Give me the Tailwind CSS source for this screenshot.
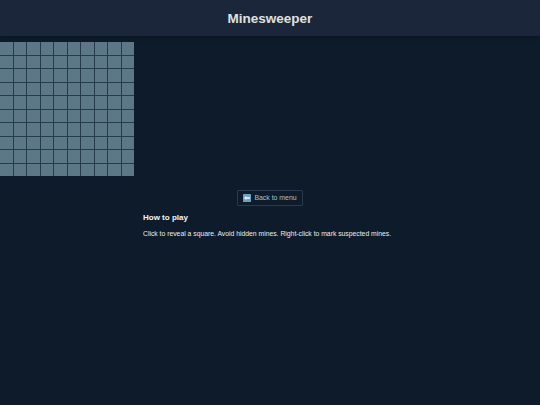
<!DOCTYPE html>
<html lang="en">
<head>
  <meta charset="UTF-8">
  <title>Minesweeper</title>
  <script src="https://cdn.jsdelivr.net/npm/@tailwindcss/browser@4"></script>
</head>
<body class="bg-[#0d1b2a] min-h-screen font-['Liberation_Sans',sans-serif] antialiased overflow-hidden">

  <!-- Header -->
  <header class="h-9 bg-[#1b263b] flex items-center justify-center shadow-[0_1px_4px_rgba(0,0,0,0.3)]">
    <h1 class="text-[13.5px] font-bold text-[#e0e1dd] translate-y-[0.5px]">Minesweeper</h1>
  </header>

  <!-- Board -->
  <div class="mt-[6px] w-[134px] h-[134px] grid grid-cols-10 grid-rows-10 gap-px bg-[#263b4b]">
    <div class="bg-[#5c7785]"></div><div class="bg-[#5c7785]"></div><div class="bg-[#5c7785]"></div><div class="bg-[#5c7785]"></div><div class="bg-[#5c7785]"></div><div class="bg-[#5c7785]"></div><div class="bg-[#5c7785]"></div><div class="bg-[#5c7785]"></div><div class="bg-[#5c7785]"></div><div class="bg-[#5c7785]"></div>
    <div class="bg-[#5c7785]"></div><div class="bg-[#5c7785]"></div><div class="bg-[#5c7785]"></div><div class="bg-[#5c7785]"></div><div class="bg-[#5c7785]"></div><div class="bg-[#5c7785]"></div><div class="bg-[#5c7785]"></div><div class="bg-[#5c7785]"></div><div class="bg-[#5c7785]"></div><div class="bg-[#5c7785]"></div>
    <div class="bg-[#5c7785]"></div><div class="bg-[#5c7785]"></div><div class="bg-[#5c7785]"></div><div class="bg-[#5c7785]"></div><div class="bg-[#5c7785]"></div><div class="bg-[#5c7785]"></div><div class="bg-[#5c7785]"></div><div class="bg-[#5c7785]"></div><div class="bg-[#5c7785]"></div><div class="bg-[#5c7785]"></div>
    <div class="bg-[#5c7785]"></div><div class="bg-[#5c7785]"></div><div class="bg-[#5c7785]"></div><div class="bg-[#5c7785]"></div><div class="bg-[#5c7785]"></div><div class="bg-[#5c7785]"></div><div class="bg-[#5c7785]"></div><div class="bg-[#5c7785]"></div><div class="bg-[#5c7785]"></div><div class="bg-[#5c7785]"></div>
    <div class="bg-[#5c7785]"></div><div class="bg-[#5c7785]"></div><div class="bg-[#5c7785]"></div><div class="bg-[#5c7785]"></div><div class="bg-[#5c7785]"></div><div class="bg-[#5c7785]"></div><div class="bg-[#5c7785]"></div><div class="bg-[#5c7785]"></div><div class="bg-[#5c7785]"></div><div class="bg-[#5c7785]"></div>
    <div class="bg-[#5c7785]"></div><div class="bg-[#5c7785]"></div><div class="bg-[#5c7785]"></div><div class="bg-[#5c7785]"></div><div class="bg-[#5c7785]"></div><div class="bg-[#5c7785]"></div><div class="bg-[#5c7785]"></div><div class="bg-[#5c7785]"></div><div class="bg-[#5c7785]"></div><div class="bg-[#5c7785]"></div>
    <div class="bg-[#5c7785]"></div><div class="bg-[#5c7785]"></div><div class="bg-[#5c7785]"></div><div class="bg-[#5c7785]"></div><div class="bg-[#5c7785]"></div><div class="bg-[#5c7785]"></div><div class="bg-[#5c7785]"></div><div class="bg-[#5c7785]"></div><div class="bg-[#5c7785]"></div><div class="bg-[#5c7785]"></div>
    <div class="bg-[#5c7785]"></div><div class="bg-[#5c7785]"></div><div class="bg-[#5c7785]"></div><div class="bg-[#5c7785]"></div><div class="bg-[#5c7785]"></div><div class="bg-[#5c7785]"></div><div class="bg-[#5c7785]"></div><div class="bg-[#5c7785]"></div><div class="bg-[#5c7785]"></div><div class="bg-[#5c7785]"></div>
    <div class="bg-[#5c7785]"></div><div class="bg-[#5c7785]"></div><div class="bg-[#5c7785]"></div><div class="bg-[#5c7785]"></div><div class="bg-[#5c7785]"></div><div class="bg-[#5c7785]"></div><div class="bg-[#5c7785]"></div><div class="bg-[#5c7785]"></div><div class="bg-[#5c7785]"></div><div class="bg-[#5c7785]"></div>
    <div class="bg-[#5c7785]"></div><div class="bg-[#5c7785]"></div><div class="bg-[#5c7785]"></div><div class="bg-[#5c7785]"></div><div class="bg-[#5c7785]"></div><div class="bg-[#5c7785]"></div><div class="bg-[#5c7785]"></div><div class="bg-[#5c7785]"></div><div class="bg-[#5c7785]"></div><div class="bg-[#5c7785]"></div>
  </div>

  <!-- Back button -->
  <div class="mt-[14px] flex justify-center">
    <button class="h-[16px] w-[66px] flex items-center justify-center gap-[3px] border border-[#2a3a4e] rounded-[1px] text-[6.9px] text-[#a9c0cd]">
      <svg class="w-[8px] h-[8px]" viewBox="0 0 8 8"><rect width="8" height="8" rx="0.5" fill="#6f9fbe"/><path d="M1 4 L3.4 2 V3.2 H7 V4.8 H3.4 V6 Z" fill="#f2f7fa"/></svg>
      <span>Back to menu</span>
    </button>
  </div>

  <!-- How to play -->
  <section class="mt-[6px] ml-[143px] w-[254px]">
    <h2 class="text-[8px] leading-[12px] font-bold text-[#f5f6f5]">How to play</h2>
    <p class="mt-[5px] text-[6.8px] leading-[10px] text-[#eceeee] whitespace-nowrap">Click to reveal a square. Avoid hidden mines. Right-click to mark suspected mines.</p>
  </section>

</body>
</html>
